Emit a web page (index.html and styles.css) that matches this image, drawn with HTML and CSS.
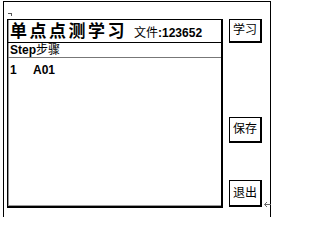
FILE: index.html
```html
<!DOCTYPE html>
<html>
<head>
<meta charset="utf-8">
<link rel="stylesheet" href="styles.css">
</head>
<body>
<div class="frame">
  <div class="corner"></div>
  <div class="main">
    <div class="panel">
      <div class="title-row">
        <span class="title">单点点测学习</span>
        <span class="file"><span class="cjk">文件</span><b>:123652</b></span>
      </div>
      <div class="head-row"><b>Step</b><span class="cjk">步骤</span></div>
      <div class="data-row"><b class="num">1</b><b>A01</b></div>
    </div>
    <div class="buttons">
      <div class="btn">学习</div>
      <div class="btn save">保存</div>
      <div class="btn quit">退出</div>
    </div>
  </div>
  <svg class="arrow" width="7" height="7" viewBox="0 0 7 7"><path d="M0.5 3.5H7M3 1L0.5 3.5L3 6" fill="none" stroke="#666" stroke-width="1"/></svg>
</div>
</body>
</html>
```
FILE: styles.css
```css
html, body {
  margin: 0;
  padding: 0;
  background: #fff;
}
body {
  width: 274px;
  height: 218px;
  overflow: hidden;
  font-family: "Liberation Sans", "Noto Sans CJK SC", sans-serif;
  color: #000;
}
.frame {
  position: relative;
  margin: 1px 0 0 3px;
  width: 268px;
  height: 216px;
  border: 1px solid #000;
  border-bottom: none;
  box-sizing: border-box;
}
.corner {
  width: 3px;
  height: 2px;
  margin: 11px 0 0 4px;
  border-top: 1px solid #555;
  border-right: 1px solid #555;
}
.main {
  display: flex;
  margin: 3px 0 0 3px;
}
.panel {
  width: 216px;
  height: 189px;
  box-sizing: border-box;
  border-top: 1px solid #000;
  border-left: 1px solid #000;
  border-right: 2px solid #000;
  border-bottom: 2px solid #000;
  box-shadow: inset 1px 0 0 #999, inset 0 -1px 0 #999;
}
.title-row {
  height: 22px;
  border-bottom: 1px solid #000;
  display: flex;
  align-items: center;
  padding-left: 2px;
}
.title {
  font-family: "DejaVu Sans", "Noto Sans CJK SC", sans-serif;
  font-weight: bold;
  font-size: 17px;
  line-height: 20px;
  letter-spacing: 2.5px;
}
.file {
  margin-left: 7px;
  margin-top: 3px;
  font-size: 12px;
  line-height: 16px;
}
.cjk {
  font-weight: normal;
}
.head-row {
  height: 14px;
  border-bottom: 1px solid #777;
  font-size: 12px;
  line-height: 14px;
  padding-left: 2px;
}
.data-row {
  font-size: 12px;
  line-height: 16px;
  padding: 4px 0 0 2px;
  display: flex;
}
.num {
  width: 23px;
}
.buttons {
  display: flex;
  flex-direction: column;
  margin-left: 6px;
}
.btn {
  width: 33px;
  height: 24px;
  box-sizing: border-box;
  border: 1px solid #000;
  border-right-width: 2px;
  border-bottom-width: 2px;
  font-family: "Liberation Sans", "Noto Sans CJK SC", sans-serif;
  font-size: 12px;
  line-height: 21px;
  text-align: center;
}
.save {
  margin-top: 74px;
  height: 26px;
  line-height: 23px;
}
.quit {
  margin-top: 37px;
  height: 27px;
  line-height: 24px;
}
.arrow {
  position: absolute;
  left: 260px;
  top: 199px;
  display: block;
}
```
